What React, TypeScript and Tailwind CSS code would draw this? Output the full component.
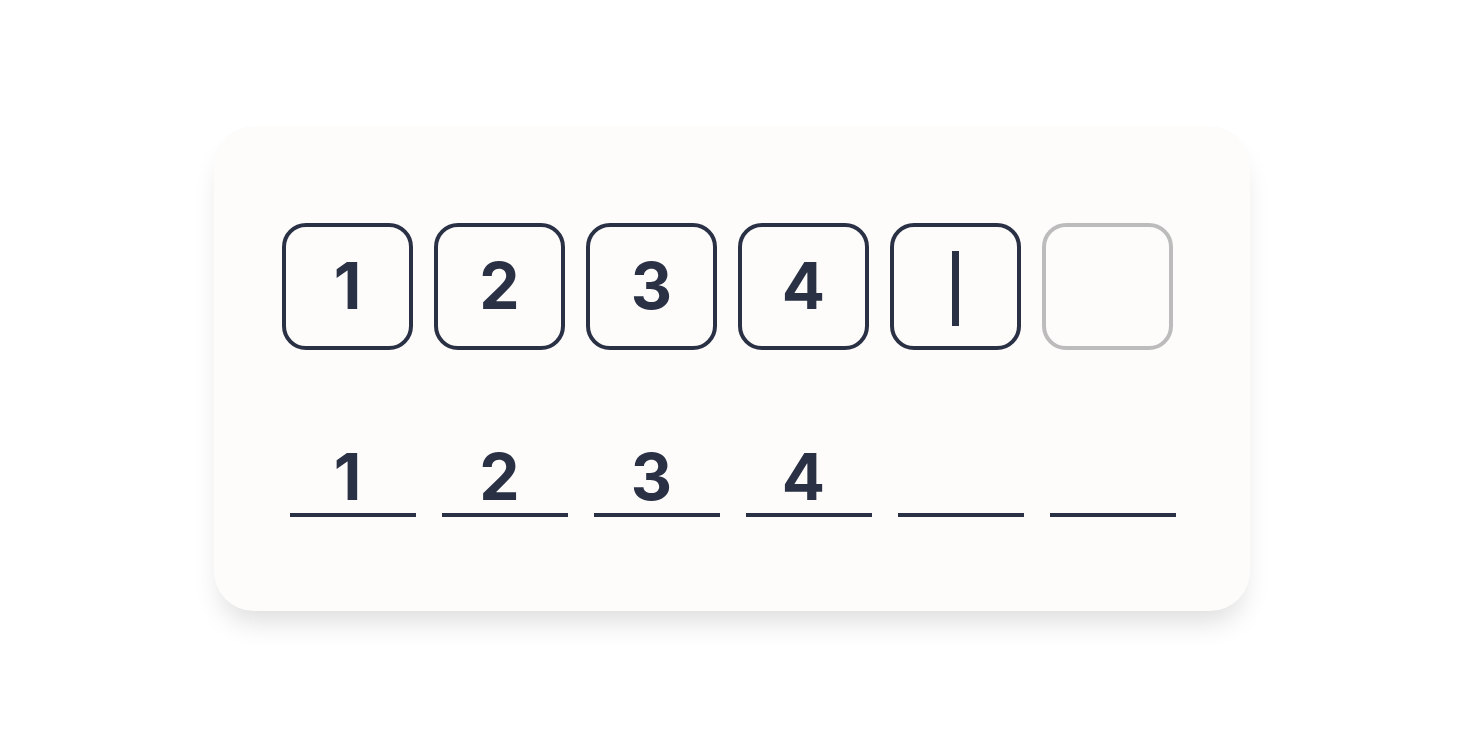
const digits = ['1', '2', '3', '4', '', '']

export default function App() {
  const active = 4

  return (
    <div className="min-h-screen w-full bg-white flex items-center justify-center" style={{ fontFamily: 'Inter, "Liberation Sans", sans-serif' }}>
      <div className="w-[1036px] h-[485px] rounded-[40px] bg-[#fdfcfb] shadow-[0_18px_28px_-8px_rgba(0,0,0,0.14)] pt-[97px] pl-[68px] flex flex-col">
        {/* boxed inputs */}
        <div className="flex gap-[21px]">
          {digits.map((d, i) => (
            <div
              key={i}
              className={
                i <= active
                  ? 'w-[131px] h-[127px] rounded-[24px] border-4 border-[#2a3145] flex items-center justify-center text-[64px] leading-none font-bold text-[#2a3145]'
                  : 'w-[131px] h-[127px] rounded-[24px] border-4 border-[#bcbcbc] flex items-center justify-center'
              }
            >
              {i === active ? <div className="w-[7px] h-[75px] bg-[#2a3145] mt-[4px]" /> : d}
            </div>
          ))}
        </div>

        {/* underlined inputs */}
        <div className="flex gap-[21px] mt-[95px]">
          {digits.map((d, i) => (
            <div key={i} className="w-[131px] flex flex-col">
              <div className="h-[64px] text-center text-[64px] leading-none font-bold text-[#2a3145]">{d}</div>
              <div className="ml-[8px] w-[126px] h-[4px] mt-[4px] bg-[#2a3145]" />
            </div>
          ))}
        </div>
      </div>
    </div>
  )
}
